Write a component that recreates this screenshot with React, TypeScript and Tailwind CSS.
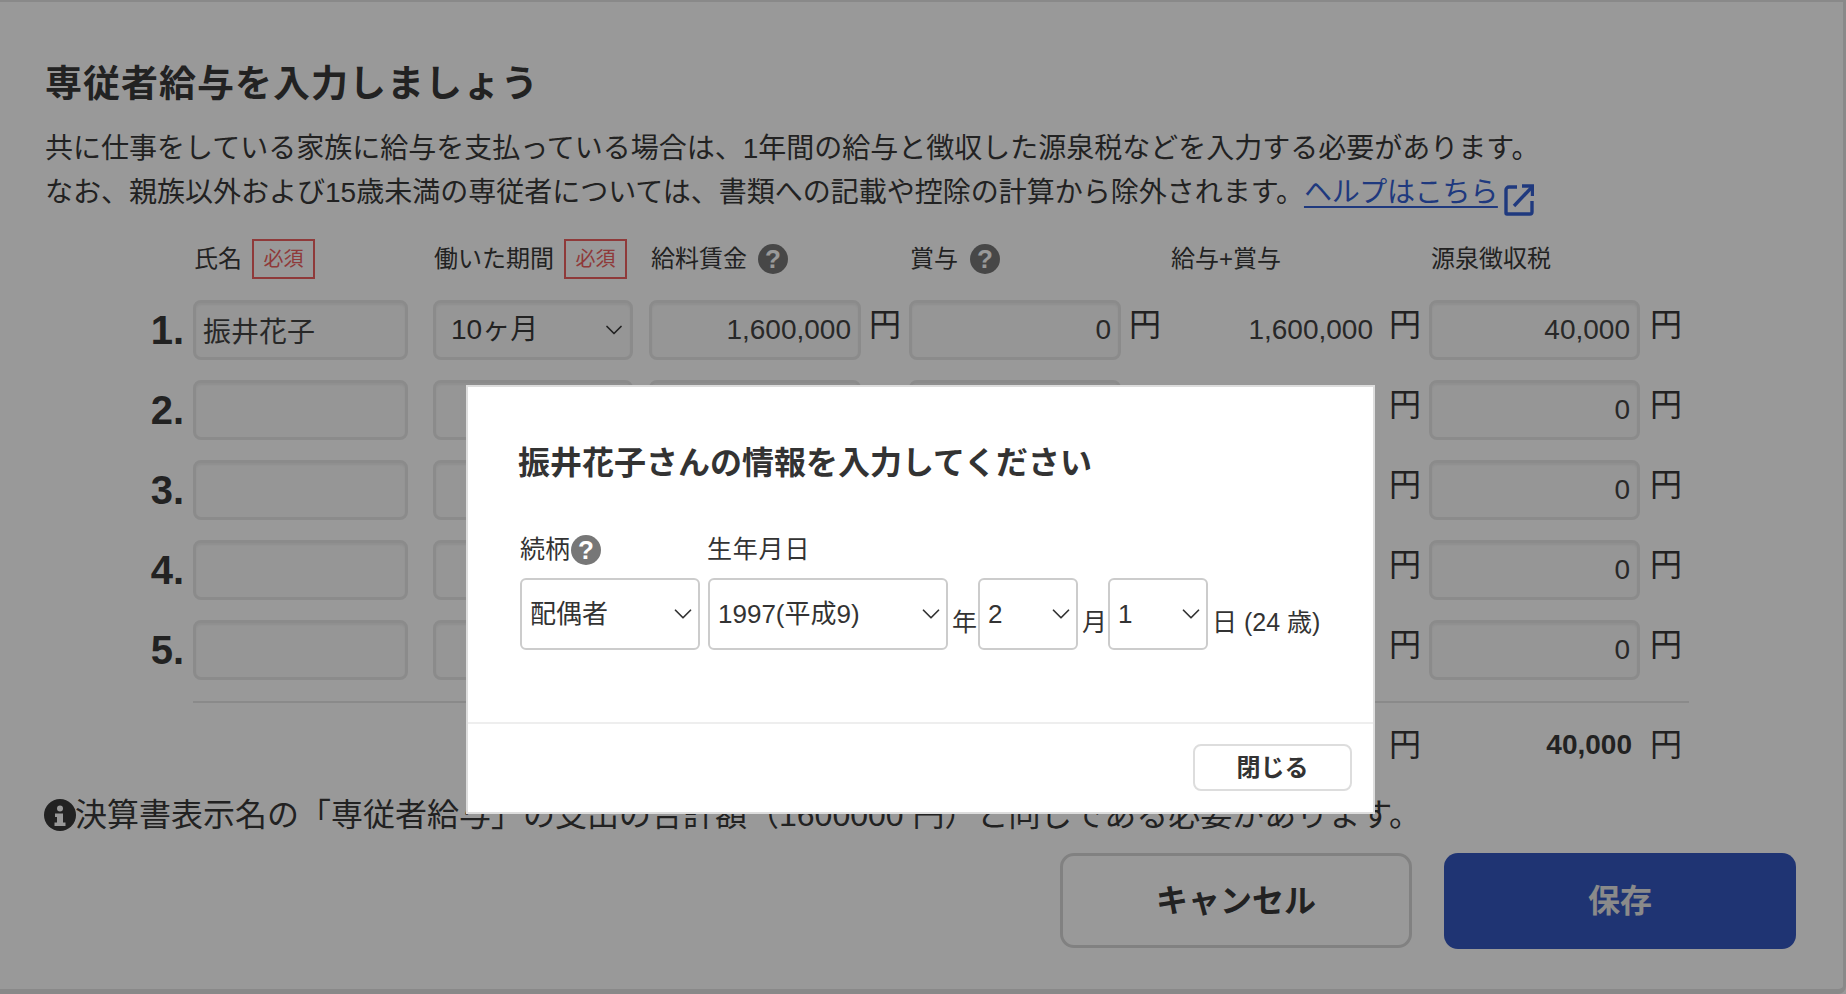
import React from 'react';
import { ChevronDown } from 'lucide-react';

const ROW_GRID = 'grid grid-cols-[148px_240px_216px_220px_40px_220px_41px_219px_40px_221px_40px]';
const FIELD = 'h-[60px] rounded-[8px] border-[3px] border-[#e8e8e8] bg-[#fafafa] px-[7px] text-[28px] text-[#444] outline-none shadow-[inset_0_2px_2px_rgba(0,0,0,0.05)]';

const rows = [
  { no: '1.', name: '振井花子', period: '10ヶ月', salary: '1,600,000', bonus: '0', total: '1,600,000', tax: '40,000' },
  { no: '2.', name: '', period: '', salary: '', bonus: '', total: '', tax: '0' },
  { no: '3.', name: '', period: '', salary: '', bonus: '', total: '', tax: '0' },
  { no: '4.', name: '', period: '', salary: '', bonus: '', total: '', tax: '0' },
  { no: '5.', name: '', period: '', salary: '', bonus: '', total: '', tax: '0' },
];

const Required = () => (
  <span className="ml-[10px] flex h-[40px] w-[63px] items-center justify-center border-2 border-[#ee6161] text-[20px] text-[#ee6161]">
    必須
  </span>
);

const Help = ({ className }: { className: string }) => (
  <span className={`flex size-[30px] shrink-0 items-center justify-center rounded-full bg-[#777] text-[26px] leading-none font-bold text-white ${className}`}>
    ?
  </span>
);

const Yen = () => <span className="text-[32px] leading-[50px] text-[#393939]">円</span>;

const Select = ({ label, width }: { label: string; width: string }) => (
  <div className={`flex h-[72px] items-center justify-between rounded-[6px] border-2 border-[#ccc] bg-white pl-[8px] text-[26px] ${width}`}>
    <span>{label}</span>
    <ChevronDown className="size-[30px] text-[#333]" strokeWidth={1.4} />
  </div>
);

export default function App() {
  return (
    <div className="relative h-[994px] w-[1846px] overflow-hidden bg-white font-['Liberation_Sans','Noto_Sans_CJK_JP',sans-serif] text-[#393939]">
      <div className="h-full rounded-br-[8px] border-t-2 border-r-[3px] border-b-[5px] border-[#e4e4e4] pt-[59px] pl-[45px]">
        <h1 className="text-[37px] leading-[48px] font-bold tracking-[1px]">専従者給与を入力しましょう</h1>
        <p className="mt-[18px] text-[28px] leading-[44px]">
          共に仕事をしている家族に給与を支払っている場合は、1年間の給与と徴収した源泉税などを入力する必要があります。
          <br />
          なお、親族以外および15歳未満の専従者については、書類への記載や控除の計算から除外されます。
          <a className="tracking-[-0.3px] text-[#3560d3] underline underline-offset-[4px]">ヘルプはこちら</a>
          <svg viewBox="0 0 30 32" className="-mb-[10px] ml-[6px] inline-block h-[32px] w-[30px] text-[#3560d3]" fill="none" stroke="currentColor" strokeWidth="3.4">
            <path d="M13 3H5a3 3 0 0 0-3 3v23a1 1 0 0 0 1 1h23a2 2 0 0 0 2-2V17" />
            <path d="M10 22 28 3" />
            <path d="M18 2h10.5v10" />
          </svg>
        </p>

        <div className={`${ROW_GRID} mt-[24px] h-[40px] items-center text-[24px] text-[#393939]`}>
          <span />
          <div className="flex items-center pl-[1px]">
            氏名
            <Required />
          </div>
          <div className="flex items-center pl-[1px]">
            働いた期間
            <Required />
          </div>
          <div className="col-span-2 flex items-center pl-[2px]">
            給料賃金
            <Help className="ml-[11px]" />
          </div>
          <div className="col-span-2 flex items-center pl-[1px]">
            賞与
            <Help className="ml-[12px]" />
          </div>
          <div className="col-span-2 pl-[1px]">給与+賞与</div>
          <div className="col-span-2 pl-[2px]">源泉徴収税</div>
        </div>

        <div className="mt-[21px] flex flex-col gap-[20px]">
          {rows.map((row) => (
            <div key={row.no} className={`${ROW_GRID} h-[60px]`}>
              <span className="pr-[9px] text-right text-[40px] leading-[60px] font-bold text-[#393939]">{row.no}</span>
              <input readOnly value={row.name} className={`${FIELD} w-[215px]`} />
              <div className={`${FIELD} flex w-[200px] items-center justify-between pr-[2px] pl-[15px] text-[#393939]`}>
                {row.period}
                <ChevronDown className="ml-auto size-[28px]" strokeWidth={1.5} />
              </div>
              <input readOnly value={row.salary} className={`${FIELD} w-[212px] text-right`} />
              <Yen />
              <input readOnly value={row.bonus} className={`${FIELD} w-[212px] text-right`} />
              <Yen />
              <span className="pr-[16px] text-right text-[28px] leading-[60px] text-[#444]">{row.total}</span>
              <Yen />
              <input readOnly value={row.tax} className={`${FIELD} w-[211px] text-right`} />
              <Yen />
            </div>
          ))}
        </div>

        <div className="mt-[21px] ml-[148px] h-[2px] w-[1496px] bg-[#e6e6e6]" />

        <div className={`${ROW_GRID} mt-[22px] h-[40px] items-center`}>
          <span className="col-span-8" />
          <span className="text-[32px] leading-[40px]">円</span>
          <span className="pr-[18px] text-right text-[28px] leading-[40px] font-bold">40,000</span>
          <span className="text-[32px] leading-[40px]">円</span>
        </div>

        <div className="mt-[30px] -ml-[1px] flex items-center text-[32px] leading-[40px]">
          <svg viewBox="0 0 32 32" className="size-[32px] shrink-0">
            <circle cx="16" cy="16" r="16" fill="#393939" />
            <circle cx="16" cy="9.5" r="3" fill="#fff" />
            <path d="M11 14.5h8v9h2.5V27h-11v-3.5H13V18h-2z" fill="#fff" />
          </svg>
          <span className="-ml-[1px]">決算書表示名の「専従者給与」の支出の合計額（1600000 円）と同じである必要があります。</span>
        </div>

        <div className="mt-[18px] flex gap-[32px] pl-[1015px]">
          <button className="h-[95px] w-[352px] rounded-[14px] border-[3px] border-[#d8d8d8] bg-white text-[32px] font-bold text-[#393939]">
            キャンセル
          </button>
          <button className="h-[96px] w-[352px] rounded-[14px] bg-[#3457c0] text-[32px] font-bold text-[#e6e6e6]">保存</button>
        </div>
      </div>

      <div className="absolute inset-0 flex items-start bg-black/40">
        <div className="mt-[385px] ml-[466px] h-[429px] w-[909px] border-2 border-[#ddd] bg-white text-[#333]">
          <div className="h-[335px] px-[50px] pt-[52px]">
            <h2 className="text-[32px] leading-[48px] font-bold">振井花子さんの情報を入力してください</h2>
            <div className="mt-[46px] flex h-[34px] items-center text-[25px]">
              <span className="pl-[2px]">続柄</span>
              <Help className="ml-[1px]" />
              <span className="ml-[106px] tracking-[0.8px]">生年月日</span>
            </div>
            <div className="mt-[11px] ml-[2px] flex items-start text-[25px]">
              <Select label="配偶者" width="w-[180px]" />
              <Select label="1997(平成9)" width="ml-[8px] w-[240px]" />
              <span className="mt-[26px] ml-[4px] w-[26px]">年</span>
              <Select label="2" width="w-[100px]" />
              <span className="mt-[26px] ml-[4px] w-[26px]">月</span>
              <Select label="1" width="w-[100px]" />
              <span className="mt-[26px] ml-[4px]">日 (24 歳)</span>
            </div>
          </div>
          <div className="flex h-[90px] justify-end border-t-2 border-[#eee] pt-[20px] pr-[21px]">
            <button className="h-[47px] w-[159px] rounded-[8px] border-2 border-[#ddd] bg-white text-[24px] font-bold text-[#333]">閉じる</button>
          </div>
        </div>
      </div>
    </div>
  );
}
